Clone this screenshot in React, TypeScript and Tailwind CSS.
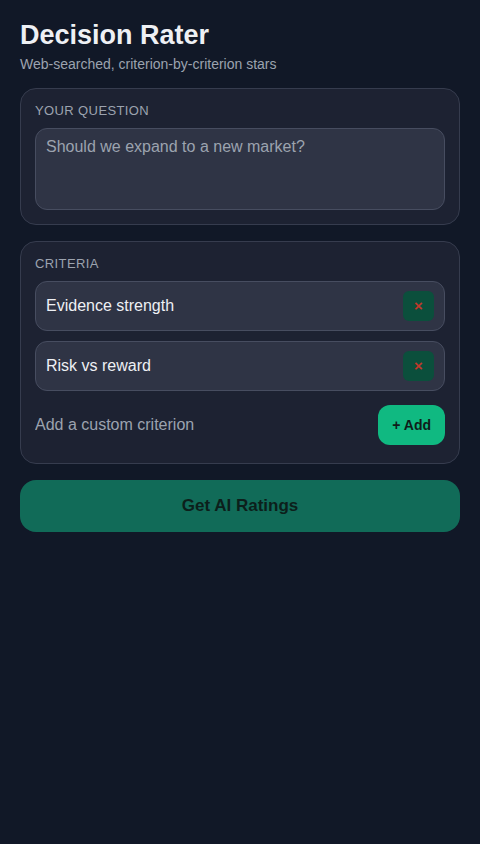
import { useState } from 'react';

export default function App() {
  const [question, setQuestion] = useState('');
  const [criteria, setCriteria] = useState(['Evidence strength', 'Risk vs reward']);
  const [custom, setCustom] = useState('');

  const addCriterion = () => {
    if (!custom.trim()) return;
    setCriteria([...criteria, custom.trim()]);
    setCustom('');
  };

  return (
    <div className="min-h-[844px] bg-[#111827] px-5 pt-[18px] pb-8 font-['Liberation_Sans',Arial,sans-serif] text-[#e5e7eb]">
      <h1 className="text-[27px] leading-[34px] font-bold text-[#eef0f4]">Decision Rater</h1>
      <p className="mt-[3px] text-[14px] leading-[18px] text-[#9ca3af]">Web-searched, criterion-by-criterion stars</p>

      <div className="mt-[15px] rounded-2xl border border-[#363c4e] bg-[#1d2232] px-[14px] pt-[14px] pb-[14px]">
        <div className="text-[13px] leading-[16px] tracking-[0.03em] uppercase text-[#9ca3af]">Your question</div>
        <textarea
          value={question}
          onChange={e => setQuestion(e.target.value)}
          placeholder="Should we expand to a new market?"
          className="mt-[9px] block h-[82px] w-full resize-none rounded-xl border border-[#474d60] bg-[#2f3445] px-[10px] py-[8px] text-[16px] leading-[20px] text-[#e5e7eb] placeholder:text-[#9ca3af] outline-none"
        />
      </div>

      <div className="mt-[16px] rounded-2xl border border-[#363c4e] bg-[#1d2232] px-[14px] pt-[14px] pb-[18px]">
        <div className="text-[13px] leading-[16px] tracking-[0.03em] uppercase text-[#9ca3af]">Criteria</div>
        <div className="mt-[9px] flex flex-col gap-[10px]">
          {criteria.map((c, i) => (
            <div key={i} className="flex h-[50px] items-center justify-between rounded-xl border border-[#474d60] bg-[#2f3445] pl-[10px] pr-[10px]">
              <span className="text-[16px] text-[#eef0f4]">{c}</span>
              <button
                onClick={() => setCriteria(criteria.filter((_, j) => j !== i))}
                className="flex h-[30px] w-[31px] items-center justify-center rounded-md bg-[#0b4f3c] text-[15px] font-bold text-[#c0392b]"
              >
                ×
              </button>
            </div>
          ))}
        </div>
        <div className="mt-[14px] flex items-center gap-2">
          <input
            value={custom}
            onChange={e => setCustom(e.target.value)}
            placeholder="Add a custom criterion"
            className="min-w-0 flex-1 bg-transparent text-[16px] text-[#e5e7eb] placeholder:text-[#9ca3af] outline-none"
          />
          <button
            onClick={addCriterion}
            className="h-[40px] rounded-xl bg-[#10b981] px-[14px] text-[14px] font-bold text-[#0f1d1a]"
          >
            + Add
          </button>
        </div>
      </div>

      <button className="mt-[16px] h-[52px] w-full rounded-2xl bg-[#116b58] text-[17px] font-bold text-[#0c1f1b]">
        Get AI Ratings
      </button>
    </div>
  );
}
